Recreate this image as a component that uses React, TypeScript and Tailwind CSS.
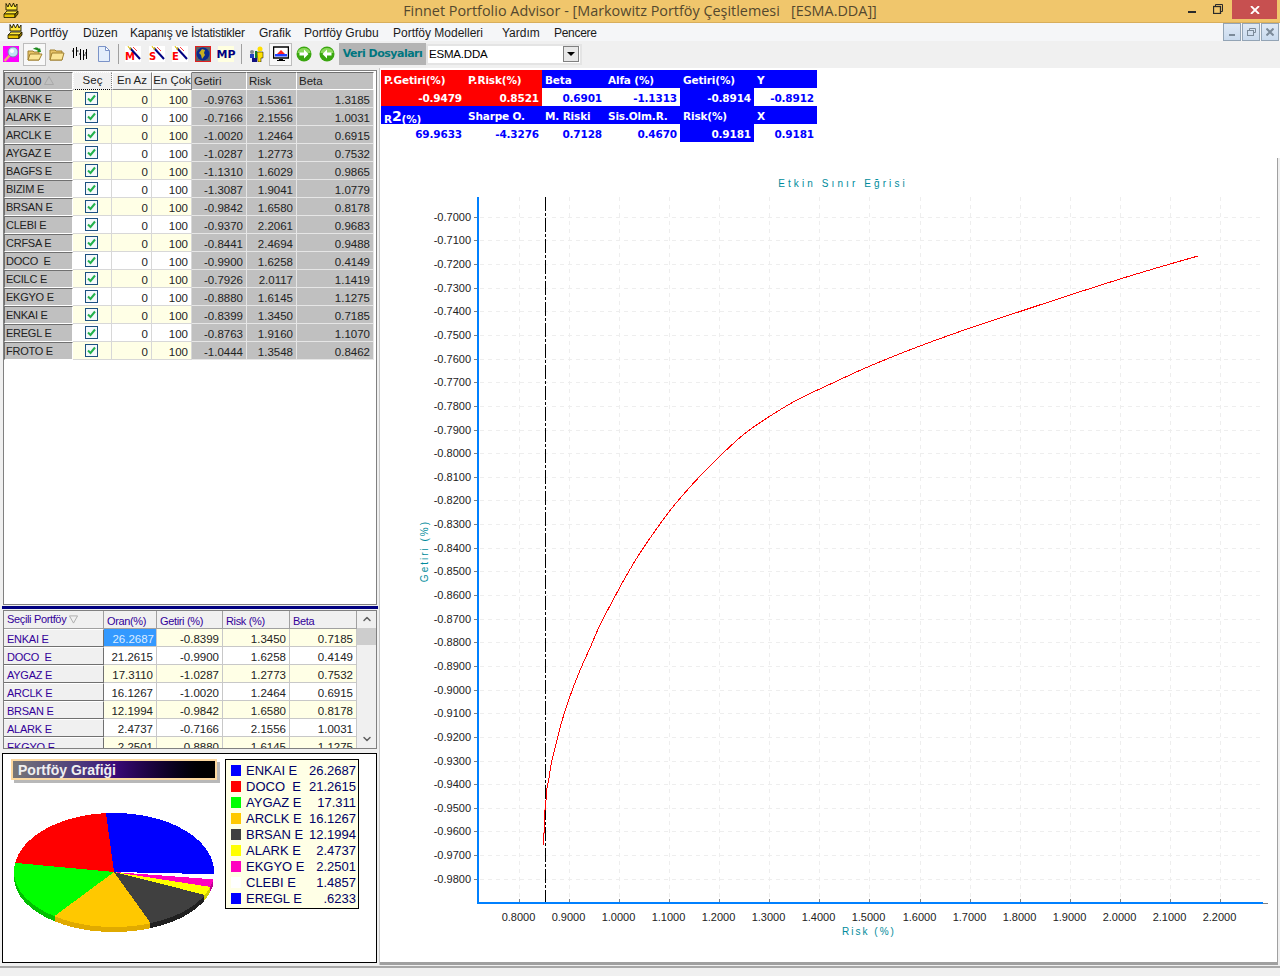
import { ChevronDown, ChevronUp } from "lucide-react";

const topRows = [
  ["AKBNK E", "-0.9763", "1.5361", "1.3185"],
  ["ALARK E", "-0.7166", "2.1556", "1.0031"],
  ["ARCLK E", "-1.0020", "1.2464", "0.6915"],
  ["AYGAZ E", "-1.0287", "1.2773", "0.7532"],
  ["BAGFS E", "-1.1310", "1.6029", "0.9865"],
  ["BIZIM E", "-1.3087", "1.9041", "1.0779"],
  ["BRSAN E", "-0.9842", "1.6580", "0.8178"],
  ["CLEBI E", "-0.9370", "2.2061", "0.9683"],
  ["CRFSA E", "-0.8441", "2.4694", "0.9488"],
  ["DOCO  E", "-0.9900", "1.6258", "0.4149"],
  ["ECILC E", "-0.7926", "2.0117", "1.1419"],
  ["EKGYO E", "-0.8880", "1.6145", "1.1275"],
  ["ENKAI E", "-0.8399", "1.3450", "0.7185"],
  ["EREGL E", "-0.8763", "1.9160", "1.1070"],
  ["FROTO E", "-1.0444", "1.3548", "0.8462"],
];

const portfolioRows = [
  ["ENKAI E", "26.2687", "-0.8399", "1.3450", "0.7185"],
  ["DOCO  E", "21.2615", "-0.9900", "1.6258", "0.4149"],
  ["AYGAZ E", "17.3110", "-1.0287", "1.2773", "0.7532"],
  ["ARCLK E", "16.1267", "-1.0020", "1.2464", "0.6915"],
  ["BRSAN E", "12.1994", "-0.9842", "1.6580", "0.8178"],
  ["ALARK E", "2.4737", "-0.7166", "2.1556", "1.0031"],
  ["EKGYO E", "2.2501", "-0.8880", "1.6145", "1.1275"],
];

const slices = [
  { name: "ENKAI E", value: "26.2687", pct: 26.2687, color: "#0000ff", dark: "#0000c0" },
  { name: "DOCO  E", value: "21.2615", pct: 21.2615, color: "#ff0000", dark: "#c00000" },
  { name: "AYGAZ E", value: "17.311", pct: 17.311, color: "#00ff00", dark: "#00c000" },
  { name: "ARCLK E", value: "16.1267", pct: 16.1267, color: "#ffc800", dark: "#e0aa00" },
  { name: "BRSAN E", value: "12.1994", pct: 12.1994, color: "#404040", dark: "#202020" },
  { name: "ALARK E", value: "2.4737", pct: 2.4737, color: "#ffff00", dark: "#d0d000" },
  { name: "EKGYO E", value: "2.2501", pct: 2.2501, color: "#ff00c0", dark: "#c00090" },
  { name: "CLEBI E", value: "1.4857", pct: 1.4857, color: "#ffffff", dark: "#ffffff" },
  { name: "EREGL E", value: ".6233", pct: 0.6233, color: "#0000ff", dark: "#0000c0" },
];

function slicePoints(start: number, end: number, dy: number) {
  const cx = 114;
  const cy = 872 + dy;
  const pts = [`${cx},${cy}`];
  for (let a = start; ; a += 1) {
    const t = Math.min(a, end);
    const s = Math.sin((t * Math.PI) / 180);
    const c = Math.cos((t * Math.PI) / 180);
    pts.push(`${(cx + 100 * c).toFixed(1)},${(cy - (s > 0 ? 59 : 55) * s).toFixed(1)}`);
    if (t >= end) break;
  }
  return pts.join(" ");
}

function Pie() {
  let angle = 0;
  const parts = slices.map((s) => {
    const start = angle;
    angle += (s.pct / 100) * 360;
    return { ...s, start, end: angle };
  });
  return (
    <svg viewBox="3 781 222 181" className="block w-[222px] h-[181px]" shapeRendering="crispEdges">
      {[5, 4, 3, 2, 1].map((d) =>
        parts.map((p) => <polygon key={p.name + d} points={slicePoints(p.start, p.end, d)} fill={p.dark} />)
      )}
      {parts.map((p) => (
        <polygon key={p.name} points={slicePoints(p.start, p.end, 0)} fill={p.color} />
      ))}
    </svg>
  );
}

const curveSteps = "543.5,845 543.5,833 544.5,833 544.5,810 545.5,810";
const curvePts = [
  [545.5, 810], [546, 800], [547, 788], [549, 778], [551, 765], [555, 748], [560, 728], [566, 708],
  [573, 688], [581, 668], [590, 648], [600, 625], [612, 602], [625, 578], [640, 553], [655, 531],
  [672, 508], [690, 487], [705, 471], [720, 456], [743, 435], [767, 418], [797, 400], [837, 381],
  [870, 366], [920, 346], [970, 328], [1020, 311.5], [1070, 295], [1120, 279], [1170, 264], [1198, 256],
];

// catmull-rom through the read off points, so the line has no corners
function smoothPath(pts: number[][]) {
  let d = `M${pts[0][0]} ${pts[0][1]}`;
  for (let i = 0; i < pts.length - 1; i++) {
    const p0 = pts[Math.max(i - 1, 0)];
    const p1 = pts[i];
    const p2 = pts[i + 1];
    const p3 = pts[Math.min(i + 2, pts.length - 1)];
    const c1x = p1[0] + (p2[0] - p0[0]) / 6;
    const c1y = p1[1] + (p2[1] - p0[1]) / 6;
    const c2x = p2[0] - (p3[0] - p1[0]) / 6;
    const c2y = p2[1] - (p3[1] - p1[1]) / 6;
    d += `C${c1x.toFixed(1)} ${c1y.toFixed(1)} ${c2x.toFixed(1)} ${c2y.toFixed(1)} ${p2[0]} ${p2[1]}`;
  }
  return d;
}

function Chart() {
  const yTicks = Array.from({ length: 29 }, (_, i) => i);
  const xTicks = Array.from({ length: 15 }, (_, i) => i);
  return (
    <svg viewBox="380 158 897 804" className="block w-[897px] h-[804px]">
      {yTicks.map((i) => {
        const y = Math.round(216.8 + i * 23.64) + 0.5;
        return (
          <g key={i}>
            <line x1={480} x2={1262} y1={y} y2={y} stroke="#eeeeee" strokeDasharray="4 4" />
            <line x1={474} x2={477} y1={y} y2={y} stroke="#808080" />
            <text x={471} y={y + 3} textAnchor="end" className="text-[11px] fill-[#222222]">
              {(-0.7 - i * 0.01).toFixed(4)}
            </text>
          </g>
        );
      })}
      {xTicks.map((i) => {
        const x = Math.round(519 + i * 50.07) + 0.5;
        return (
          <g key={i}>
            <line x1={x} x2={x} y1={197} y2={900} stroke="#eeeeee" strokeDasharray="4 4" />
            <line x1={x} x2={x} y1={899} y2={902} stroke="#808080" />
            <text x={x - 1} y={921} textAnchor="middle" className="text-[11px] fill-[#222222]">
              {(0.8 + i * 0.1).toFixed(4)}
            </text>
          </g>
        );
      })}
      <line x1={1263} x2={1268} y1={903.5} y2={903.5} stroke="#808080" />
      <line x1={478} x2={478} y1={197} y2={904} stroke="#0080ff" strokeWidth={2} />
      <line x1={477} x2={1263} y1={903} y2={903} stroke="#0080ff" strokeWidth={2} />
      <line x1={545.5} x2={545.5} y1={197} y2={902} stroke="#000000" strokeDasharray="14 2 3 2" />
      <polyline points={curveSteps} fill="none" stroke="#ff0000" />
      <path d={smoothPath(curvePts)} fill="none" stroke="#ff0000" shapeRendering="crispEdges" />
      <text x={843} y={187} textAnchor="middle" className="text-[10px] fill-[#008b9b] tracking-[3.100px]">
        Etkin Sınır Eğrisi
      </text>
      <text x={869} y={935} textAnchor="middle" className="text-[10px] fill-[#008b9b] tracking-[2px]">
        Risk  (%)
      </text>
      <text
        x={428}
        y={551}
        textAnchor="middle"
        transform="rotate(-90 428 551)"
        className="text-[10px] fill-[#008b9b] tracking-[2px]"
      >
        Getiri  (%)
      </text>
    </svg>
  );
}

function Logo() {
  return (
    <svg viewBox="0 0 16 16" className="w-[16px] h-[16px]">
      <path d="M3 0.500l2 3.500 1.500-4 2 4 2-4 1.500 4 2-3v6H3z" fill="#ffe83a" stroke="#1a1400" strokeWidth="0.900" />
      <path d="M1 11l3-3h11l-3 3z" fill="#ffe83a" stroke="#1a1400" strokeWidth="0.800" />
      <path d="M1 11h11v3.500H1z" fill="#e8c400" stroke="#1a1400" strokeWidth="0.800" />
      <path d="M12 11l3-3v3l-3 3.500z" fill="#8a7000" stroke="#1a1400" strokeWidth="0.800" />
    </svg>
  );
}

function Wand({ letter }: { letter: string }) {
  return (
    <div className="relative w-[16px] h-[16px] bg-white overflow-visible">
      <span className="absolute left-0 bottom-0 text-[10px] leading-[11px] font-bold text-[#ff0000] font-['DejaVu_Sans',sans-serif]">
        {letter}
      </span>
      <svg viewBox="0 0 16 16" className="absolute left-0 top-0 w-[16px] h-[16px]">
        <line x1="5" y1="2" x2="15" y2="13" stroke="#000080" strokeWidth="2" />
        <path d="M3 0l1 2 2 0-1 2" stroke="#e0c000" fill="none" />
        <line x1="8" y1="1" x2="12" y2="5" stroke="#ff4040" />
      </svg>
    </div>
  );
}

function GreenArrow({ left }: { left?: boolean }) {
  return (
    <svg viewBox="0 0 16 16" className="w-[16px] h-[16px]">
      <circle cx="8" cy="8" r="7.500" fill="#3aa60f" />
      <path d="M1.500 7a6.500 5 0 0 1 13 0z" fill="#8ad85a" />
      <path
        d={left ? "M8 3.500L3.500 8 8 12.500V9.500h4.500v-3H8z" : "M8 3.500L12.500 8 8 12.500V9.500H3.500v-3H8z"}
        fill="#ffffff"
      />
    </svg>
  );
}

function Toolbar() {
  return (
    <div className="h-[27px] bg-[#f0f0f0] flex items-center pl-[3px]">
      <svg viewBox="0 0 16 16" className="w-[16px] h-[16px]">
        <rect width="16" height="16" fill="#ff00ff" />
        <line x1="7" y1="9" x2="1.500" y2="15" stroke="#e8b070" strokeWidth="2.500" />
        <circle cx="10" cy="6" r="5" fill="#bfe4f5" stroke="#6f8fa8" />
        <circle cx="9" cy="5" r="2" fill="#ffffff" />
      </svg>
      <div className="ml-[4px] w-[23px] h-[23px] bg-[#f8f8f8] border border-[#bdbdbd] flex items-center justify-center">
        <svg viewBox="0 0 16 16" className="w-[16px] h-[16px]">
          <path d="M1 5h5l1 1h5v8H1z" fill="#e8c468" stroke="#a08030" />
          <path d="M3 8h12l-3 6H1z" fill="#fbe596" stroke="#a08030" />
          <path d="M6 3c2-2 5-2 6 0l1-1 1 4-4 0 1-1c-1-1-3-2-5-2z" fill="#1f8a1f" />
        </svg>
      </div>
      <svg viewBox="0 0 16 16" className="ml-[3px] w-[16px] h-[16px]">
        <path d="M1 4h5l1 1h6v9H1z" fill="#e8c468" stroke="#a08030" />
        <path d="M3 7h12l-2 7H1z" fill="#fbe596" stroke="#a08030" />
      </svg>
      <svg viewBox="0 0 16 16" className="ml-[7px] w-[16px] h-[16px]" stroke="#000000" fill="none">
        <path d="M1.500 2v10M0 5h1.500M4.500 1v9M4.500 5h2M8.500 3v11M7 8h1.500M11.500 4v10M11.500 9h2M14.500 3v10M13 7h1.500" />
      </svg>
      <svg viewBox="0 0 16 16" className="ml-[8px] w-[16px] h-[16px]">
        <path d="M2.500 0.500h7l4 4v11h-11z" fill="#e4eefb" stroke="#7b93c8" />
        <path d="M9.500 0.500v4h4z" fill="#ffffff" stroke="#7b93c8" />
      </svg>
      <div className="ml-[6px] w-px h-[20px] bg-[#a0a0a0]" />
      <div className="ml-[6px]">
        <Wand letter="M" />
      </div>
      <div className="ml-[8px]">
        <Wand letter="S" />
      </div>
      <div className="ml-[7px]">
        <Wand letter="E" />
      </div>
      <svg viewBox="0 0 16 16" className="ml-[7px] w-[16px] h-[16px]">
        <rect x="0.500" y="0.500" width="15" height="15" fill="#606060" stroke="#e02020" />
        <circle cx="8" cy="8" r="6.500" fill="#0a2a90" />
        <path d="M7 3l3 1-1 3 1 2-3 4-1-4-2-2z" fill="#c8b020" />
      </svg>
      <div className="ml-[7px] w-[16px] h-[16px] bg-[#ffffe0] flex items-center justify-center text-[11px] leading-none font-bold font-['DejaVu_Sans',sans-serif] text-[#000080]">
        MP
      </div>
      <div className="ml-[7px] w-px h-[20px] bg-[#a0a0a0]" />
      <svg viewBox="0 0 16 16" className="ml-[7px] w-[16px] h-[16px]">
        <circle cx="11" cy="3" r="2.500" fill="#ffe000" />
        <path d="M8 6h6v6h-2v4H9z" fill="#ffe000" stroke="#000000" strokeWidth="0.500" />
        <circle cx="3" cy="6" r="2" fill="#808890" />
        <path d="M1 8h4v4H1z" fill="#2040c0" />
        <path d="M6 5v11h2V5z" fill="#108030" />
        <path d="M3 12h5v4H3z" fill="#101080" />
      </svg>
      <div className="ml-[4px] w-[23px] h-[23px] bg-[#f8f8f8] border border-[#bdbdbd] flex items-center justify-center">
        <svg viewBox="0 0 16 16" className="w-[16px] h-[16px]">
          <rect x="0.500" y="1" width="15" height="11" fill="#ffffff" stroke="#000000" strokeWidth="1.500" />
          <rect x="2" y="8" width="12" height="2.500" fill="#2040ff" />
          <path d="M4 8l4-4 4 4z" fill="#ff2020" />
          <path d="M6 13h4v1h2v1H4v-1h2z" fill="#000000" />
        </svg>
      </div>
      <div className="ml-[4px]">
        <GreenArrow />
      </div>
      <div className="ml-[7px]">
        <GreenArrow left />
      </div>
      <div className="ml-[4px] w-[87px] h-[22px] bg-[#b4b4b4] flex items-center justify-center text-[11px] font-bold font-['DejaVu_Sans',sans-serif] text-[#00767f] whitespace-nowrap tracking-[-0.5px]">
        Veri Dosyaları
      </div>
      <div className="w-[156px] h-[21px] bg-white border-2 border-[#e4e4e4] flex items-center justify-between pl-[1px] pr-[1px] text-[11.500px] text-black">
        <span className="tracking-[-0.2px]">ESMA.DDA</span>
        <div className="w-[16px] h-[16px] bg-[#e8e8e8] border border-[#808080] flex items-center justify-center">
          <svg viewBox="0 0 8 4" className="w-[8px] h-[4px]">
            <path d="M0 0h8L4 4z" fill="#000000" />
          </svg>
        </div>
      </div>
    </div>
  );
}

function TitleBar() {
  return (
    <div className="h-[23px] bg-[#f0c66c] border-b border-[#d8ae5c] flex items-center pl-[3px]">
      <Logo />
      <div className="flex-1 ml-[73px] text-center text-[14.400px] text-[#54482e] whitespace-pre font-['Open_Sans',sans-serif]">
        {"Finnet Portfolio Advisor - [Markowitz Portföy Çeşitlemesi   [ESMA.DDA]]"}
      </div>
      <div className="flex items-start h-full">
        <div className="w-[8px] h-[2px] bg-[#2a2a2a] mt-[11px]" />
        <svg viewBox="0 0 10 10" className="ml-[17px] mt-[4px] w-[10px] h-[10px]" fill="none" stroke="#2a2a2a">
          <path d="M2.500 2.500V0.500h7v7H7.500" />
          <rect x="0.500" y="2.500" width="7" height="7" strokeWidth="1.300" />
        </svg>
        <div className="ml-[9px] mr-[3px] w-[45px] h-[19px] bg-[#c75050] flex items-center justify-center">
          <svg viewBox="0 0 10 8" className="w-[10px] h-[8px]" stroke="#ffffff" strokeWidth="1.800">
            <path d="M1 0l8 8M9 0L1 8" />
          </svg>
        </div>
      </div>
    </div>
  );
}

function MdiButton({ children }: { children: React.ReactNode }) {
  return (
    <div className="w-[18px] h-[18px] border border-[#93a4b5] bg-gradient-to-b from-[#dfe9f5] to-[#c9daee] flex items-center justify-center">
      {children}
    </div>
  );
}

function MenuBar() {
  const items = [
    ["Portföy", "w-[53px]", ""],
    ["Düzen", "w-[47px]", ""],
    ["Kapanış ve İstatistikler", "w-[129px]", "tracking-[-0.220px]"],
    ["Grafik", "w-[45px]", ""],
    ["Portföy Grubu", "w-[89px]", ""],
    ["Portföy Modelleri", "w-[109px]", ""],
    ["Yardım", "w-[52px]", ""],
    ["Pencere", "w-[60px]", "tracking-[-0.300px]"],
  ];
  return (
    <div className="h-[18px] bg-[#f5f6f8] flex items-center pl-[7px] text-[12px] text-[#1a1a1a]">
      <Logo />
      <div className="flex ml-[7px] flex-1 pt-[2px]">
        {items.map(([label, width, spacing]) => (
          <span key={label} className={`${width} ${spacing} whitespace-nowrap`}>
            {label}
          </span>
        ))}
      </div>
      <div className="flex gap-px mr-[1px]">
        <MdiButton>
          <div className="w-[6px] h-[2px] bg-[#7b8a99] mt-[6px]" />
        </MdiButton>
        <MdiButton>
          <svg viewBox="0 0 9 8" className="w-[9px] h-[8px]" fill="none" stroke="#7b8a99">
            <path d="M2.500 2V0.500h6v4H7" />
            <rect x="0.500" y="2.500" width="6" height="5" />
          </svg>
        </MdiButton>
        <MdiButton>
          <svg viewBox="0 0 8 8" className="w-[8px] h-[8px]" stroke="#7b8a99" strokeWidth="2">
            <path d="M0.500 0.500l7 7M7.500 0.500l-7 7" />
          </svg>
        </MdiButton>
      </div>
    </div>
  );
}

function HeaderButton({ children, dotted }: { children: string; dotted?: boolean }) {
  return (
    <div
      className={`h-[18px] bg-[#f0f0f0] border-r border-[#808080] flex items-center justify-center border-l border-l-white border-t border-t-white ${
        dotted ? "border-b border-dotted border-b-black" : "border-b border-b-[#808080]"
      }`}
    >
      {children}
    </div>
  );
}

function CheckBox() {
  return (
    <svg viewBox="0 0 13 13" className="w-[13px] h-[13px]">
      <rect x="0.500" y="0.500" width="12" height="12" fill="#f4f8fc" stroke="#1c5180" />
      <path d="M3 6.500l2.500 2.500L10 3.500" fill="none" stroke="#22b14c" strokeWidth="2" />
    </svg>
  );
}

function StockGrid() {
  const graycell =
    "bg-[#c0c0c0] border-t border-t-[#707070] border-l border-l-[#707070] border-r border-r-white border-b border-b-white";
  const numcell = "bg-[#c0c0c0] border-r border-b border-[#e6e6e6] text-right pr-[3px] leading-[20px]";
  const headcell =
    "h-[18px] bg-[#c0c0c0] border-t border-t-[#707070] border-r border-r-white border-b border-b-white pl-[2px] leading-[16px]";
  return (
    <div className="ml-[3px] mt-[2px] w-[374px] h-[535px] border border-[#808080] bg-white pt-px text-[11.500px] text-[#222222]">
      <div className="grid grid-cols-[69px_39px_40px_40px_55px_50px_77px]">
        <div className={`${headcell} border-l border-l-[#707070] flex items-center gap-[3px]`}>
          <span className="tracking-[-0.200px]">XU100</span>
          <svg viewBox="0 0 10 9" className="w-[10px] h-[9px]">
            <path d="M5 0.500L9.500 8.500H0.500z" fill="none" stroke="#a8a8a8" />
          </svg>
        </div>
        <HeaderButton dotted>Seç</HeaderButton>
        <HeaderButton>En Az</HeaderButton>
        <HeaderButton>En Çok</HeaderButton>
        <div className={headcell}>Getiri</div>
        <div className={headcell}>Risk</div>
        <div className={headcell}>Beta</div>
        {topRows.map((row, i) => {
          const bg = i % 2 === 0 ? "bg-[#ffffe6]" : "bg-white";
          return (
            <div key={row[0]} className="contents">
              <div className={`h-[18px] pl-[1px] text-[11px] leading-[17px] tracking-[-0.250px] whitespace-pre ${graycell}`}>
                {row[0]}
              </div>
              <div className={`h-[18px] flex items-center justify-center pr-[2px] border-r border-b border-[#d8d8d8] ${bg}`}>
                <CheckBox />
              </div>
              <div className={`h-[18px] text-right pr-[3px] leading-[20px] border-r border-b border-[#d8d8d8] ${bg}`}>0</div>
              <div className={`h-[18px] text-right pr-[3px] leading-[20px] border-r border-b border-[#d8d8d8] ${bg}`}>100</div>
              <div className={`h-[18px] ${numcell}`}>{row[1]}</div>
              <div className={`h-[18px] ${numcell}`}>{row[2]}</div>
              <div className={`h-[18px] ${numcell}`}>{row[3]}</div>
            </div>
          );
        })}
      </div>
    </div>
  );
}

function PortfolioGrid() {
  const head =
    "h-[18px] bg-[#f0f0f0] border-r border-r-[#a0a0a0] border-b border-b-[#a0a0a0] text-[#330099] text-[11px] pl-[3px] leading-[20px] tracking-[-0.350px] whitespace-nowrap";
  return (
    <div className="ml-[3px] mt-px w-[374px] h-[139px] border border-[#808080] bg-[#f0f0f0] text-[11.500px] text-[#222222] flex overflow-hidden">
      <div className="w-[353px] grid grid-cols-[100px_53px_66px_67px_67px] content-start h-[137px] overflow-hidden">
        <div className={`${head} flex items-center gap-[3px]`}>
          <span>Seçili Portföy</span>
          <svg viewBox="0 0 10 9" className="w-[9px] h-[9px]">
            <path d="M0.500 0.500H9.500L5 8.500z" fill="none" stroke="#a8a8a8" />
          </svg>
        </div>
        <div className={head}>Oran(%)</div>
        <div className={head}>Getiri (%)</div>
        <div className={head}>Risk (%)</div>
        <div className={head}>Beta</div>
        {portfolioRows.map((row, i) => {
          const bg = i % 2 === 0 ? "bg-[#ffffe6]" : "bg-white";
          const cell = `h-[18px] text-right pr-[3px] leading-[20px] border-r border-b border-[#c8c8c8] ${bg}`;
          return (
            <div key={row[0]} className="contents">
              <div className="h-[18px] bg-[#f0f0f0] border-r border-r-[#707070] border-b border-b-[#707070] border-t border-t-white text-[#330099] text-[11px] pl-[3px] leading-[18px] tracking-[-0.250px] whitespace-pre">
                {row[0]}
              </div>
              <div
                className={
                  i === 0
                    ? "h-[18px] text-right pr-[2px] leading-[20px] border-r border-b border-[#c8c8c8] bg-[#3399ff] text-[#dcecff]"
                    : `${cell} pr-[2px]`
                }
              >
                {row[1]}
              </div>
              <div className={cell}>{row[2]}</div>
              <div className={cell}>{row[3]}</div>
              <div className={cell}>{row[4]}</div>
            </div>
          );
        })}
      </div>
      <div className="flex-1 flex flex-col items-center bg-[#f0f0f0] text-[#606060]">
        <div className="h-[17px] flex items-center">
          <ChevronUp size={12} strokeWidth={3} />
        </div>
        <div className="w-full h-[17px] bg-[#cdcdcd]" />
        <div className="flex-1" />
        <div className="h-[17px] flex items-center">
          <ChevronDown size={12} strokeWidth={3} />
        </div>
      </div>
    </div>
  );
}

function PiePanel() {
  return (
    <div className="ml-[2px] mt-[4px] w-[375px] h-[210px] border border-black bg-white flex">
      <div className="w-[222px]">
        <div className="ml-[8px] mt-[5px] w-[206px] h-[21px] border-2 border-[#fcd9a0] bg-gradient-to-r from-[#777777] via-[#3b0a7a] to-black shadow-[3px_3px_0_#b8b8b8] text-[14px] font-bold text-[#f0f0f0] pl-[5px] leading-[18px]">
          Portföy Grafiği
        </div>
        <div className="mt-px">
          <Pie />
        </div>
      </div>
      <div className="mt-[5px] w-[134px] h-[150px] border border-black bg-[#ffffe6] pt-[3px] pl-[5px] pr-[2px] text-[13px] text-[#000066]">
        {slices.map((s) => (
          <div key={s.name} className="h-[16px] flex items-center leading-[16px] whitespace-pre">
            <div className="w-[10px] h-[11px] shrink-0" style={{ backgroundColor: s.color }} />
            <span className="ml-[5px] flex-1">{s.name}</span>
            <span>{s.value}</span>
          </div>
        ))}
      </div>
    </div>
  );
}

type Stat = { text: React.ReactNode; tone: "red" | "blue" | "white" };

const statRows: { id: string; head: boolean; cells: Stat[] }[] = [
  {
    id: "a",
    head: true,
    cells: [
      { text: "P.Getiri(%)", tone: "red" },
      { text: "P.Risk(%)", tone: "red" },
      { text: "Beta", tone: "blue" },
      { text: "Alfa (%)", tone: "blue" },
      { text: "Getiri(%)", tone: "blue" },
      { text: "Y", tone: "blue" },
    ],
  },
  {
    id: "b",
    head: false,
    cells: [
      { text: "-0.9479", tone: "red" },
      { text: "0.8521", tone: "red" },
      { text: "0.6901", tone: "white" },
      { text: "-1.1313", tone: "white" },
      { text: "-0.8914", tone: "blue" },
      { text: "-0.8912", tone: "white" },
    ],
  },
  {
    id: "c",
    head: true,
    cells: [
      {
        text: (
          <span className="relative top-[2px]">
            R<span className="text-[14px] relative top-[-2px]">2</span>(%)
          </span>
        ),
        tone: "blue",
      },
      { text: "Sharpe O.", tone: "blue" },
      { text: "M. Riski", tone: "blue" },
      { text: "Sis.Olm.R.", tone: "blue" },
      { text: "Risk(%)", tone: "blue" },
      { text: "X", tone: "blue" },
    ],
  },
  {
    id: "d",
    head: false,
    cells: [
      { text: "69.9633", tone: "white" },
      { text: "-4.3276", tone: "white" },
      { text: "0.7128", tone: "white" },
      { text: "0.4670", tone: "white" },
      { text: "0.9181", tone: "blue" },
      { text: "0.9181", tone: "white" },
    ],
  },
];

function StatsTable() {
  const tones = {
    red: "bg-[#ff0000] text-white",
    blue: "bg-[#0000ff] text-white",
    white: "bg-white text-[#0000ff]",
  };
  return (
    <div className="ml-px mt-[2px] w-[436px] h-[72px] grid grid-cols-[84px_77px_63px_75px_74px_63px] text-[10.500px] tracking-[-0.150px] font-bold font-['DejaVu_Sans',sans-serif]">
      {statRows.map((row) =>
        row.cells.map((c, i) => (
          <div
            key={row.id + i}
            className={`h-[18px] whitespace-nowrap ${tones[c.tone]} ${
              row.head ? "pl-[3px] leading-[20px]" : "text-right pr-[3px] leading-[21px]"
            }`}
          >
            {c.text}
          </div>
        ))
      )}
    </div>
  );
}

export default function App() {
  return (
    <div className="w-[1280px] h-[976px] overflow-hidden flex flex-col bg-[#f0f0f0] font-['Liberation_Sans',sans-serif]">
      <TitleBar />
      <MenuBar />
      <Toolbar />
      <div className="flex h-[898px]">
        <div className="w-[380px] border-r border-[#c8c8c8]">
          <StockGrid />
          <div className="ml-[2px] mt-px w-[376px] h-[3px] bg-[#000080]" />
          <PortfolioGrid />
          <PiePanel />
        </div>
        <div className="flex-1 bg-white flex flex-col">
          <div className="h-[90px]">
            <StatsTable />
          </div>
          <div className="flex flex-1">
            <div className="w-[897px]">
              <Chart />
              <div className="h-[3px] bg-[#a0a0a0]" />
            </div>
            <div className="flex-1 bg-[#f0f0f0] border-l border-[#a0a0a0]" />
          </div>
        </div>
      </div>
      <div className="h-[10px] mt-px border-t-2 border-[#a8a8a8] bg-[#f0f0f0]" />
    </div>
  );
}
